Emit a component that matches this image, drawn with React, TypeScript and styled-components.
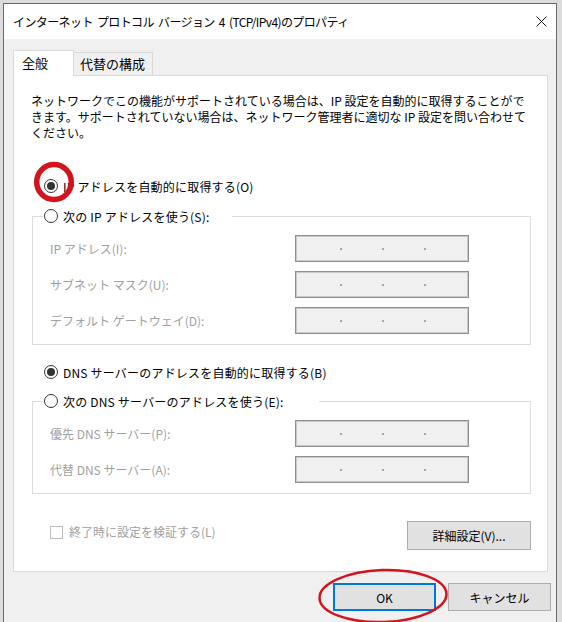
import React from "react";
import styled, { createGlobalStyle } from "styled-components";

const GlobalStyle = createGlobalStyle`
  html, body {
    margin: 0;
    padding: 0;
    overflow: hidden;
    background: #dcdcdc;
  }
  body {
    font-family: "Noto Sans CJK JP", "Noto Sans", sans-serif;
    font-size: 12px;
    color: #000;
  }
  * {
    box-sizing: border-box;
  }
`;

const Page = styled.div`
  padding: 3px 0 0 3px;
`;

const Window = styled.div`
  width: 554px;
  height: 640px;
  border: 1px solid #6a6a6a;
  border-bottom: none;
  background: #f0f0f0;
`;

const TitleBar = styled.div`
  height: 35px;
  background: #fff;
  display: flex;
  align-items: center;
  justify-content: space-between;
  padding-left: 9px;
`;

const Title = styled.div`
  font-size: 12px;
  letter-spacing: -0.6px;
  word-spacing: 2px;
  white-space: nowrap;
`;

const CloseButton = styled.div`
  width: 30px;
  height: 100%;
  display: flex;
  align-items: center;
  justify-content: center;
`;

const Body = styled.div`
  padding: 11px 8px 0 9px;
`;

const TabRow = styled.div`
  display: flex;
  align-items: flex-end;
  height: 26px;
  margin-bottom: -1px;
`;

const Tab = styled.div<{ $active?: boolean; $width: number; $pad: number }>`
  position: relative;
  width: ${({ $width }) => $width}px;
  height: ${({ $active }) => ($active ? 26 : 23)}px;
  margin-bottom: ${({ $active }) => ($active ? 0 : 1)}px;
  margin-left: ${({ $active }) => ($active ? 0 : -1)}px;
  z-index: ${({ $active }) => ($active ? 1 : 0)};
  padding-left: ${({ $pad }) => $pad}px;
  padding-top: ${({ $active }) => ($active ? 3 : 2)}px;
  border: 1px solid #d9d9d9;
  border-bottom: none;
  background: ${({ $active }) => ($active ? "#fff" : "#f0f0f0")};
  font-size: 13px;
  line-height: 18px;
  white-space: nowrap;
`;

const Panel = styled.div`
  width: 535px;
  background: #fff;
  border: 1px solid #d9d9d9;
  padding: 17px 16px 21px 17px;
`;

const Description = styled.p`
  margin: 0;
  line-height: 16px;
  white-space: nowrap;
`;

const RadioRow = styled.label<{ $top: number }>`
  position: relative;
  display: flex;
  align-items: center;
  gap: 5px;
  height: 16px;
  margin: ${({ $top }) => $top}px 0 0 13px;
  letter-spacing: 0.2px;
  white-space: nowrap;
`;

const RadioCircle = styled.span<{ $checked?: boolean }>`
  width: 14px;
  height: 14px;
  border-radius: 50%;
  border: 1px solid #333;
  background: #fff;
  display: flex;
  align-items: center;
  justify-content: center;

  &::after {
    content: "";
    width: 8px;
    height: 8px;
    border-radius: 50%;
    background: #333;
    display: ${({ $checked }) => ($checked ? "block" : "none")};
  }
`;

const Group = styled.fieldset<{ $top: number }>`
  margin: ${({ $top }) => $top}px 0 0 1px;
  width: 499px;
  border: 1px solid #dcdcdc;
  padding: 11px 0 10px 0;
  display: flex;
  flex-direction: column;
  gap: 9px;
`;

const Legend = styled.legend<{ $tail: number }>`
  margin-left: 10px;
  padding: 0 ${({ $tail }) => $tail}px 0 1px;
  display: flex;
  align-items: center;
  gap: 5px;
  height: 16px;
  letter-spacing: 0.2px;
  white-space: nowrap;
`;

const FieldRow = styled.div`
  display: grid;
  grid-template-columns: 1fr 174px;
  align-items: center;
  height: 27px;
  padding: 0 61px 0 17px;
`;

const FieldLabel = styled.span`
  color: #a0a0a0;
  white-space: nowrap;
`;

const AddressBox = styled.div`
  height: 27px;
  background: #f0f0f0;
  border: 1px solid #8f8f8f;
  box-shadow: inset 0 0 0 1px #c9c9c9;
  display: flex;
  align-items: center;
  justify-content: center;
  gap: 40px;
  padding-left: 2px;
`;

const Dot = styled.span`
  width: 2px;
  height: 2px;
  background: #a8a8a8;
`;

const BottomRow = styled.div`
  display: flex;
  align-items: center;
  justify-content: space-between;
  margin-top: 27px;
`;

const CheckLabel = styled.label`
  display: flex;
  align-items: flex-start;
  gap: 6px;
  height: 24px;
  margin-left: 19px;
  color: #a0a0a0;
  line-height: 16px;
  white-space: nowrap;
`;

const CheckBox = styled.span`
  width: 13px;
  height: 13px;
  margin-top: 2px;
  border: 1px solid #bcbcbc;
  background: #fff;
`;

const Button = styled.button<{ $primary?: boolean; $width: number; $height: number }>`
  position: relative;
  width: ${({ $width }) => $width}px;
  height: ${({ $height }) => $height}px;
  background: #e1e1e1;
  border: ${({ $primary }) => ($primary ? "2px solid #0078d7" : "1px solid #adadad")};
  font-family: inherit;
  font-size: 12px;
  color: #000;
  padding: 0;
`;

const Footer = styled.div`
  display: flex;
  justify-content: flex-end;
  gap: 12px;
  padding: 11px 5px 0 0;
`;

const Marker = styled.svg`
  position: absolute;
  pointer-events: none;
  overflow: visible;
`;

function AddressField() {
  return (
    <AddressBox>
      <Dot />
      <Dot />
      <Dot />
    </AddressBox>
  );
}

export default function App() {
  return (
    <>
      <GlobalStyle />
      <Page>
        <Window>
          <TitleBar>
            <Title>インターネット プロトコル バージョン 4 (TCP/IPv4)のプロパティ</Title>
            <CloseButton>
              <svg width="11" height="11" viewBox="0 0 11 11">
                <path d="M0.5 0.5 L10.5 10.5 M10.5 0.5 L0.5 10.5" stroke="#111" strokeWidth="1" />
              </svg>
            </CloseButton>
          </TitleBar>

          <Body>
            <TabRow>
              <Tab $active $width={61} $pad={8}>全般</Tab>
              <Tab $width={80} $pad={6}>代替の構成</Tab>
            </TabRow>

            <Panel>
              <Description>
                ネットワークでこの機能がサポートされている場合は、IP 設定を自動的に取得することがで
                <br />
                きます。サポートされていない場合は、ネットワーク管理者に適切な IP 設定を問い合わせて
                <br />
                ください。
              </Description>

              <RadioRow $top={37}>
                <RadioCircle $checked />
                IP アドレスを自動的に取得する(O)
                <Marker width="42" height="42" style={{ left: -11, top: -17 }}>
                  <ellipse cx="21" cy="21" rx="17.3" ry="17.5" fill="none" stroke="#d3141c" strokeWidth="5.5" />
                </Marker>
              </RadioRow>

              <Group $top={14}>
                <Legend $tail={22}>
                  <RadioCircle />
                  次の IP アドレスを使う(S):
                </Legend>
                <FieldRow>
                  <FieldLabel>IP アドレス(I):</FieldLabel>
                  <AddressField />
                </FieldRow>
                <FieldRow>
                  <FieldLabel>サブネット マスク(U):</FieldLabel>
                  <AddressField />
                </FieldRow>
                <FieldRow>
                  <FieldLabel>デフォルト ゲートウェイ(D):</FieldLabel>
                  <AddressField />
                </FieldRow>
              </Group>

              <RadioRow $top={19}>
                <RadioCircle $checked />
                DNS サーバーのアドレスを自動的に取得する(B)
              </RadioRow>

              <Group $top={13}>
                <Legend $tail={36}>
                  <RadioCircle />
                  次の DNS サーバーのアドレスを使う(E):
                </Legend>
                <FieldRow>
                  <FieldLabel>優先 DNS サーバー(P):</FieldLabel>
                  <AddressField />
                </FieldRow>
                <FieldRow>
                  <FieldLabel>代替 DNS サーバー(A):</FieldLabel>
                  <AddressField />
                </FieldRow>
              </Group>

              <BottomRow>
                <CheckLabel>
                  <CheckBox />
                  終了時に設定を検証する(L)
                </CheckLabel>
                <Button $width={124} $height={29}>詳細設定(V)...</Button>
              </BottomRow>
            </Panel>
          </Body>

          <Footer>
            <Button $primary $width={103} $height={28}>
              OK
              <Marker width="130" height="54" style={{ left: -17, top: -16 }}>
                <ellipse
                  cx="65"
                  cy="27"
                  rx="63.5"
                  ry="26"
                  fill="none"
                  stroke="#d3141c"
                  strokeWidth="2.5"
                  transform="rotate(-2 65 27)"
                />
              </Marker>
            </Button>
            <Button $width={103} $height={28}>キャンセル</Button>
          </Footer>
        </Window>
      </Page>
    </>
  );
}
